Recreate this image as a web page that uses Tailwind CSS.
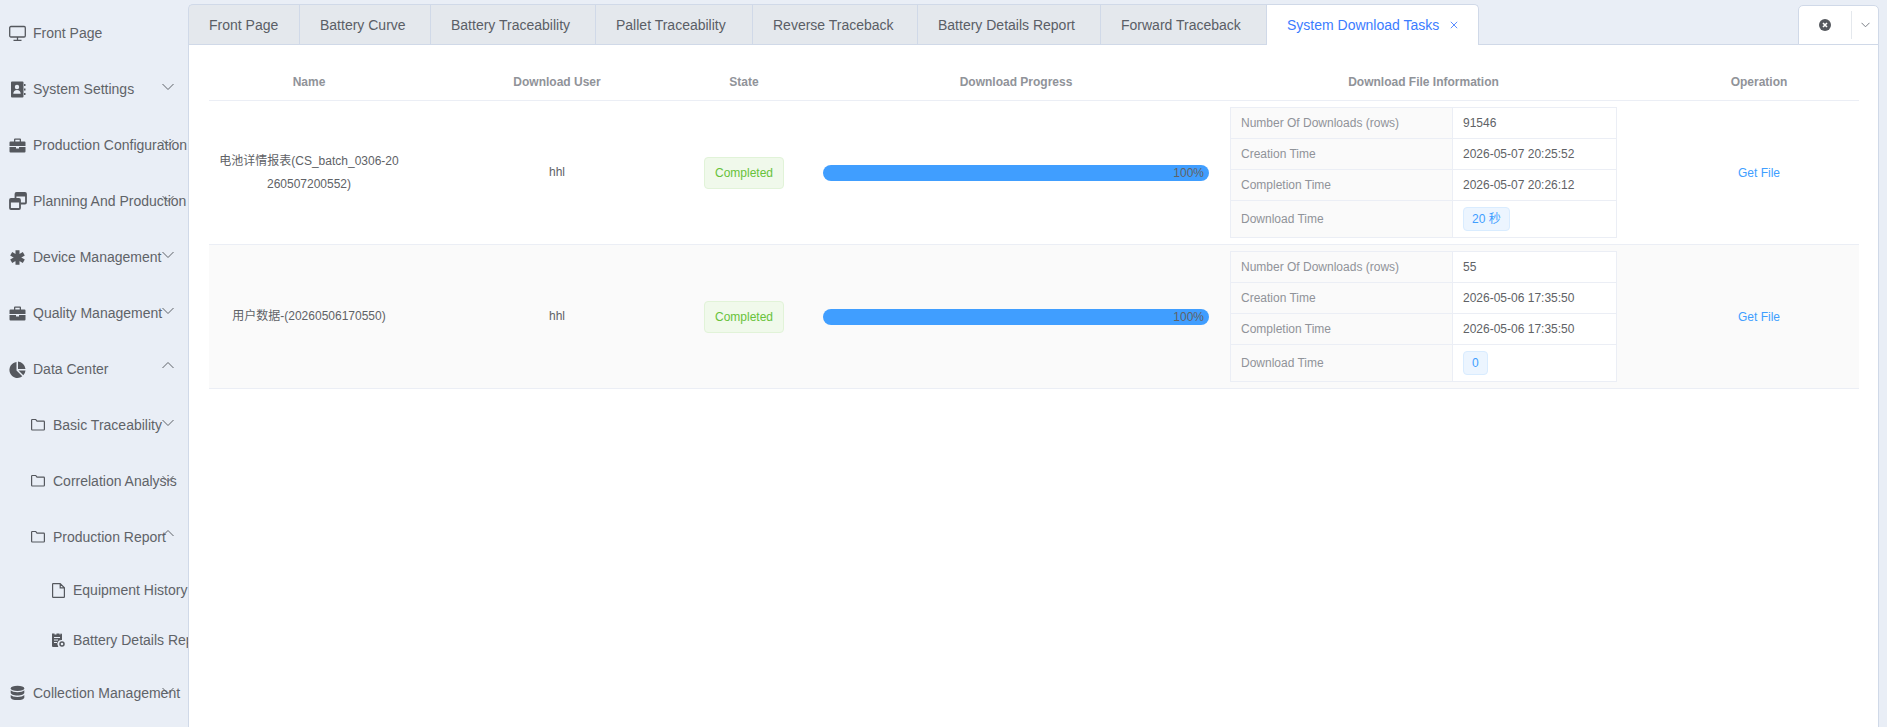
<!DOCTYPE html>
<html lang="en">
  <head>
    <meta charset="UTF-8" />
    <title>System Download Tasks</title>
    <script src="https://cdn.jsdelivr.net/npm/@tailwindcss/browser@4"></script>
  </head>
  <body class="h-[727px] overflow-hidden bg-[#e9eef6] font-['Liberation_Sans','Noto_Sans_CJK_SC',sans-serif] text-[#606266]">
    <div class="flex h-[727px]">
      <!-- Sidebar -->
      <aside class="w-[188px] shrink-0 overflow-hidden pt-[5px] text-sm text-[#5f6368]">
        <div class="relative flex h-14 items-center whitespace-nowrap pl-[9px]">
          <svg class="mr-[7px] h-[17px] w-[17px] shrink-0" viewBox="0 0 17 17" fill="none" stroke="#55585e" stroke-width="1.3"><rect x=".7" y="1.500" width="15.600" height="10.500" rx="1.200"/><path d="M8.500 12v3M4.500 15.300h8"/></svg>
          Front Page
        </div>
        <div class="relative flex h-14 items-center whitespace-nowrap pl-[9px]">
          <svg class="mr-[7px] h-[17px] w-[17px] shrink-0" viewBox="0 0 17 17" fill="#55585e"><path d="M3 .5h10.500a1 1 0 0 1 1 1v14a1 1 0 0 1-1 1H3a1 1 0 0 1-1-1v-14a1 1 0 0 1 1-1zm5 3.300a2.200 2.200 0 1 0 0 4.400 2.200 2.200 0 0 0 0-4.400zM4.300 12.800h7.400c0-2.200-1.500-3.800-3.700-3.800s-3.700 1.600-3.700 3.800z" fill-rule="evenodd"/><path d="M15 3h1.500v2H15zM15 7.500h1.500v2H15zM15 12h1.500v2H15z"/></svg>
          System Settings
          <svg class="absolute left-[162px] top-[22px] h-2 w-3" viewBox="0 0 12 8" fill="none" stroke="#5f6368"><path d="M.5 1l5.500 5.500L11.500 1"/></svg>
        </div>
        <div class="relative flex h-14 items-center whitespace-nowrap pl-[9px]">
          <svg class="mr-[7px] h-[17px] w-[17px] shrink-0" viewBox="0 0 17 17" fill="#55585e"><path d="M6 1.500h5a1 1 0 0 1 1 1v2h3.500a1 1 0 0 1 1 1V9H.5V5.500a1 1 0 0 1 1-1H5v-2a1 1 0 0 1 1-1zm.3 1.300v1.700h4.400V2.800zM.5 10H7v1.500h3V10h6.500v4.500a1 1 0 0 1-1 1h-14a1 1 0 0 1-1-1z" fill-rule="evenodd"/></svg>
          Production Configuration
          <svg class="absolute left-[162px] top-[22px] h-2 w-3" viewBox="0 0 12 8" fill="none" stroke="#5f6368"><path d="M.5 1l5.500 5.500L11.500 1"/></svg>
        </div>
        <div class="relative flex h-14 items-center whitespace-nowrap pl-[9px]">
          <svg class="mr-[6px] h-[18px] w-[18px] shrink-0" viewBox="0 0 18 18" fill="none" stroke="#55585e" stroke-width="1.800"><rect x="1" y="7" width="10" height="10" rx="1"/><path d="M6.500 6.500V2a1 1 0 0 1 1-1H16a1 1 0 0 1 1 1v8.500a1 1 0 0 1-1 1h-4.500"/><path d="M1 9h10" stroke-width="3"/><path d="M7 3h10" stroke-width="3"/></svg>
          Planning And Production
          <svg class="absolute left-[162px] top-[22px] h-2 w-3" viewBox="0 0 12 8" fill="none" stroke="#5f6368"><path d="M.5 1l5.500 5.500L11.500 1"/></svg>
        </div>
        <div class="relative flex h-14 items-center whitespace-nowrap pl-[9px]">
          <svg class="mr-[7px] h-[17px] w-[17px] shrink-0" viewBox="0 0 17 17" fill="none" stroke="#55585e" stroke-width="4"><path d="M8.500 1.200v14.600M2.200 4.850l12.600 7.300M14.800 4.850L2.200 12.150"/></svg>
          Device Management
          <svg class="absolute left-[162px] top-[22px] h-2 w-3" viewBox="0 0 12 8" fill="none" stroke="#5f6368"><path d="M.5 1l5.500 5.500L11.500 1"/></svg>
        </div>
        <div class="relative flex h-14 items-center whitespace-nowrap pl-[9px]">
          <svg class="mr-[7px] h-[17px] w-[17px] shrink-0" viewBox="0 0 17 17" fill="#55585e"><path d="M6 1.500h5a1 1 0 0 1 1 1v2h3.500a1 1 0 0 1 1 1V9H.5V5.500a1 1 0 0 1 1-1H5v-2a1 1 0 0 1 1-1zm.3 1.300v1.700h4.400V2.800zM.5 10H7v1.500h3V10h6.500v4.500a1 1 0 0 1-1 1h-14a1 1 0 0 1-1-1z" fill-rule="evenodd"/></svg>
          Quality Management
          <svg class="absolute left-[162px] top-[22px] h-2 w-3" viewBox="0 0 12 8" fill="none" stroke="#5f6368"><path d="M.5 1l5.500 5.500L11.500 1"/></svg>
        </div>
        <div class="relative flex h-14 items-center whitespace-nowrap pl-[9px]">
          <svg class="mr-[7px] h-[17px] w-[17px] shrink-0" viewBox="0 0 17 17" fill="#55585e"><path d="M7.500 1v8.500l5.800 5.800A8 8 0 1 1 7.500 1zM9 .6a8 8 0 0 1 7.500 7.400H9zM9.500 9.500h7a8 8 0 0 1-2.200 4.800z"/></svg>
          Data Center
          <svg class="absolute left-[162px] top-[20px] h-2 w-3" viewBox="0 0 12 8" fill="none" stroke="#5f6368"><path d="M.5 7L6 1.500 11.500 7"/></svg>
        </div>
        <div class="relative flex h-14 items-center whitespace-nowrap pl-[31px]">
          <svg class="mr-2 h-[14px] w-[14px] shrink-0" viewBox="0 0 14 14" fill="none" stroke="#55585e" stroke-width="1.200"><path d="M.6 2.200a.7.700 0 0 1 .7-.7h3.400l1.300 1.700h6.700a.7.700 0 0 1 .7.700v7.400a.7.700 0 0 1-.7.700H1.300a.7.700 0 0 1-.7-.7z"/></svg>
          Basic Traceability
          <svg class="absolute left-[162px] top-[22px] h-2 w-3" viewBox="0 0 12 8" fill="none" stroke="#5f6368"><path d="M.5 1l5.500 5.500L11.500 1"/></svg>
        </div>
        <div class="relative flex h-14 items-center whitespace-nowrap pl-[31px]">
          <svg class="mr-2 h-[14px] w-[14px] shrink-0" viewBox="0 0 14 14" fill="none" stroke="#55585e" stroke-width="1.200"><path d="M.6 2.200a.7.700 0 0 1 .7-.7h3.400l1.300 1.700h6.700a.7.700 0 0 1 .7.700v7.400a.7.700 0 0 1-.7.700H1.300a.7.700 0 0 1-.7-.7z"/></svg>
          Correlation Analysis
          <svg class="absolute left-[162px] top-[22px] h-2 w-3" viewBox="0 0 12 8" fill="none" stroke="#5f6368"><path d="M.5 1l5.500 5.500L11.500 1"/></svg>
        </div>
        <div class="relative flex h-14 items-center whitespace-nowrap pl-[31px]">
          <svg class="mr-2 h-[14px] w-[14px] shrink-0" viewBox="0 0 14 14" fill="none" stroke="#55585e" stroke-width="1.200"><path d="M.6 2.200a.7.700 0 0 1 .7-.7h3.400l1.300 1.700h6.700a.7.700 0 0 1 .7.700v7.400a.7.700 0 0 1-.7.700H1.300a.7.700 0 0 1-.7-.7z"/></svg>
          Production Report
          <svg class="absolute left-[162px] top-[20px] h-2 w-3" viewBox="0 0 12 8" fill="none" stroke="#5f6368"><path d="M.5 7L6 1.500 11.500 7"/></svg>
        </div>
        <div class="flex h-[50px] items-center whitespace-nowrap pl-[52px]">
          <svg class="mr-2 h-[15px] w-[13px] shrink-0" viewBox="0 0 13 15" fill="none" stroke="#55585e" stroke-width="1.200"><path d="M.6 1.200a.6.600 0 0 1 .6-.6h7l4.200 4.200v9a.6.600 0 0 1-.6.600H1.200a.6.600 0 0 1-.6-.6zM8.200.6v4.200h4.200"/></svg>
          Equipment History
        </div>
        <div class="flex h-[50px] items-center whitespace-nowrap pl-[52px]">
          <svg class="mr-2 h-[15px] w-[13px] shrink-0" viewBox="0 0 13 15" fill="#55585e"><path d="M0 .5h2.500v1h2v-1h3v1h1V.5H9a1 1 0 0 1 1 1V7a4 4 0 0 0-3.800 6.500V14H1a1 1 0 0 1-1-1zM2 4v1h6V4zm0 2.500v1h4v-1zM2 9v1h3V9z" fill-rule="evenodd"/><circle cx="10" cy="11" r="2" fill="none" stroke="#55585e" stroke-width="1.500"/></svg>
          Battery Details Report
        </div>
        <div class="relative flex h-14 items-center whitespace-nowrap pl-[9px]">
          <svg class="mr-[7px] h-[17px] w-[17px] shrink-0" viewBox="0 0 17 17" fill="#55585e"><ellipse cx="8.500" cy="3.400" rx="6.800" ry="2.700"/><path d="M1.700 5.300v2.500c0 1.500 3 2.700 6.800 2.700s6.800-1.200 6.800-2.700V5.300c-1 1.300-3.700 2-6.800 2s-5.800-.7-6.800-2zM1.700 9.900v2.500c0 1.500 3 2.700 6.800 2.700s6.800-1.200 6.800-2.700V9.900c-1 1.300-3.700 2-6.800 2s-5.800-.7-6.800-2z"/></svg>
          Collection Management
          <svg class="absolute left-[162px] top-[22px] h-2 w-3" viewBox="0 0 12 8" fill="none" stroke="#5f6368"><path d="M.5 1l5.500 5.500L11.500 1"/></svg>
        </div>
      </aside>

      <!-- Right side -->
      <div class="flex min-w-0 flex-1 flex-col pr-2 pt-1">
        <!-- Tabs -->
        <div class="relative z-10 -mb-px flex h-[41px] shrink-0 items-stretch justify-between text-sm">
          <div class="flex">
            <div class="flex w-[111px] items-center rounded-tl-[5px] border-y border-l border-[#d0d9e8] bg-[#e4e8ed] pl-5 text-[#5a5e66]">Front Page</div>
            <div class="flex w-[131px] items-center border-y border-l border-[#d0d9e8] bg-[#e4e8ed] pl-5 text-[#5a5e66]">Battery Curve</div>
            <div class="flex w-[165px] items-center border-y border-l border-[#d0d9e8] bg-[#e4e8ed] pl-5 text-[#5a5e66]">Battery Traceability</div>
            <div class="flex w-[157px] items-center border-y border-l border-[#d0d9e8] bg-[#e4e8ed] pl-5 text-[#5a5e66]">Pallet Traceability</div>
            <div class="flex w-[165px] items-center border-y border-l border-[#d0d9e8] bg-[#e4e8ed] pl-5 text-[#5a5e66]">Reverse Traceback</div>
            <div class="flex w-[183px] items-center border-y border-l border-[#d0d9e8] bg-[#e4e8ed] pl-5 text-[#5a5e66]">Battery Details Report</div>
            <div class="flex w-[166px] items-center border-y border-l border-[#d0d9e8] bg-[#e4e8ed] pl-5 text-[#5a5e66]">Forward Traceback</div>
            <div class="flex w-[213px] items-center justify-between rounded-tr-[5px] border-x border-t border-[#d0d9e8] bg-white pl-5 pr-5 text-[#3b7cff]">
              System Download Tasks
              <svg class="h-2 w-2" viewBox="0 0 8 8" fill="none" stroke="#5b8cff"><path d="M.8.8l6.400 6.400M7.200.8L.8 7.200"/></svg>
            </div>
          </div>
          <div class="mt-px flex w-[81px] items-center rounded-t-[5px] border border-[#d0d9e8] bg-white">
            <div class="flex w-[52px] justify-center">
              <svg class="h-3 w-3" viewBox="0 0 12 12"><circle cx="6" cy="6" r="6" fill="#55585e"/><path d="M4 4l4 4M8 4l-4 4" stroke="#fff" stroke-width="1.600"/></svg>
            </div>
            <div class="flex h-7 flex-1 items-center justify-center border-l border-[#e4e8ed]">
              <svg class="h-[6px] w-[9px]" viewBox="0 0 9 6" fill="none" stroke="#7b7f86"><path d="M.5.8l4 4 4-4"/></svg>
            </div>
          </div>
        </div>

        <!-- Content -->
        <main class="flex-1 border-x border-t border-[#d0d9e8] bg-white px-5 pt-5">
          <table class="w-[1650px] table-fixed border-collapse text-xs">
            <colgroup>
              <col class="w-[230px]" />
              <col class="w-[236px]" />
              <col class="w-[138px]" />
              <col class="w-[406px]" />
              <col class="w-[409px]" />
              <col class="w-[231px]" />
            </colgroup>
            <thead>
              <tr class="h-[35px] border-b border-[#ebeef5] font-bold text-[#909399]">
                <th class="pr-[30px] text-center">Name</th>
                <th class="text-center">Download User</th>
                <th class="text-center">State</th>
                <th class="text-center">Download Progress</th>
                <th class="text-center">Download File Information</th>
                <th class="pl-[31px] text-center">Operation</th>
              </tr>
            </thead>
            <tbody>
              <tr class="h-[144px] border-b border-[#ebeef5]">
                <td class="pr-[30px] pl-2.5 pt-[2px] text-center">
                  <div class="w-[180px] break-all leading-[23px]">电池详情报表(CS_batch_0306-20260507200552)</div>
                </td>
                <td class="text-center">hhl</td>
                <td class="pt-[2px] text-center">
                  <span class="inline-flex h-8 items-center rounded border border-[#e1f3d8] bg-[#f0f9eb] px-2.5 text-[#67c23a]">Completed</span>
                </td>
                <td class="px-2.5 pt-[2px]">
                  <div class="flex h-4 items-center justify-end rounded-full bg-[#409eff] pr-[5px]">100%</div>
                </td>
                <td class="px-[11px]">
                  <table class="w-[387px] table-fixed border-collapse">
                    <tbody>
                      <tr class="h-[31px]">
                        <td class="w-[222px] border border-[#ebeef5] bg-[#fafafa] pl-2.5 text-[#909399]">Number Of Downloads (rows)</td>
                        <td class="border border-[#ebeef5] bg-white pl-2.5">91546</td>
                      </tr>
                      <tr class="h-[31px]">
                        <td class="border border-[#ebeef5] bg-[#fafafa] pl-2.5 text-[#909399]">Creation Time</td>
                        <td class="border border-[#ebeef5] bg-white pl-2.5">2026-05-07 20:25:52</td>
                      </tr>
                      <tr class="h-[31px]">
                        <td class="border border-[#ebeef5] bg-[#fafafa] pl-2.5 text-[#909399]">Completion Time</td>
                        <td class="border border-[#ebeef5] bg-white pl-2.5">2026-05-07 20:26:12</td>
                      </tr>
                      <tr class="h-[37px]">
                        <td class="border border-[#ebeef5] bg-[#fafafa] pl-2.5 text-[#909399]">Download Time</td>
                        <td class="border border-[#ebeef5] bg-white pl-2.5">
                          <span class="inline-flex h-6 items-center rounded border border-[#d9ecff] bg-[#ecf5ff] px-2 align-middle text-[#409eff]">20 秒</span>
                        </td>
                      </tr>
                    </tbody>
                  </table>
                </td>
                <td class="pl-[31px] pt-[2px] text-center text-[#409eff]">Get File</td>
              </tr>
              <tr class="h-[144px] border-b border-[#ebeef5] bg-[#fafafa]">
                <td class="pr-[30px] pl-2.5 text-center">
                  <div class="w-[180px] break-all leading-[23px]">用户数据-(20260506170550)</div>
                </td>
                <td class="text-center">hhl</td>
                <td class="pt-[2px] text-center">
                  <span class="inline-flex h-8 items-center rounded border border-[#e1f3d8] bg-[#f0f9eb] px-2.5 text-[#67c23a]">Completed</span>
                </td>
                <td class="px-2.5 pt-[2px]">
                  <div class="flex h-4 items-center justify-end rounded-full bg-[#409eff] pr-[5px]">100%</div>
                </td>
                <td class="px-[11px]">
                  <table class="w-[387px] table-fixed border-collapse">
                    <tbody>
                      <tr class="h-[31px]">
                        <td class="w-[222px] border border-[#ebeef5] bg-[#fafafa] pl-2.5 text-[#909399]">Number Of Downloads (rows)</td>
                        <td class="border border-[#ebeef5] bg-white pl-2.5">55</td>
                      </tr>
                      <tr class="h-[31px]">
                        <td class="border border-[#ebeef5] bg-[#fafafa] pl-2.5 text-[#909399]">Creation Time</td>
                        <td class="border border-[#ebeef5] bg-white pl-2.5">2026-05-06 17:35:50</td>
                      </tr>
                      <tr class="h-[31px]">
                        <td class="border border-[#ebeef5] bg-[#fafafa] pl-2.5 text-[#909399]">Completion Time</td>
                        <td class="border border-[#ebeef5] bg-white pl-2.5">2026-05-06 17:35:50</td>
                      </tr>
                      <tr class="h-[37px]">
                        <td class="border border-[#ebeef5] bg-[#fafafa] pl-2.5 text-[#909399]">Download Time</td>
                        <td class="border border-[#ebeef5] bg-white pl-2.5">
                          <span class="inline-flex h-6 items-center rounded border border-[#d9ecff] bg-[#ecf5ff] px-2 align-middle text-[#409eff]">0</span>
                        </td>
                      </tr>
                    </tbody>
                  </table>
                </td>
                <td class="pl-[31px] pt-[2px] text-center text-[#409eff]">Get File</td>
              </tr>
            </tbody>
          </table>
        </main>
      </div>
    </div>
  </body>
</html>
